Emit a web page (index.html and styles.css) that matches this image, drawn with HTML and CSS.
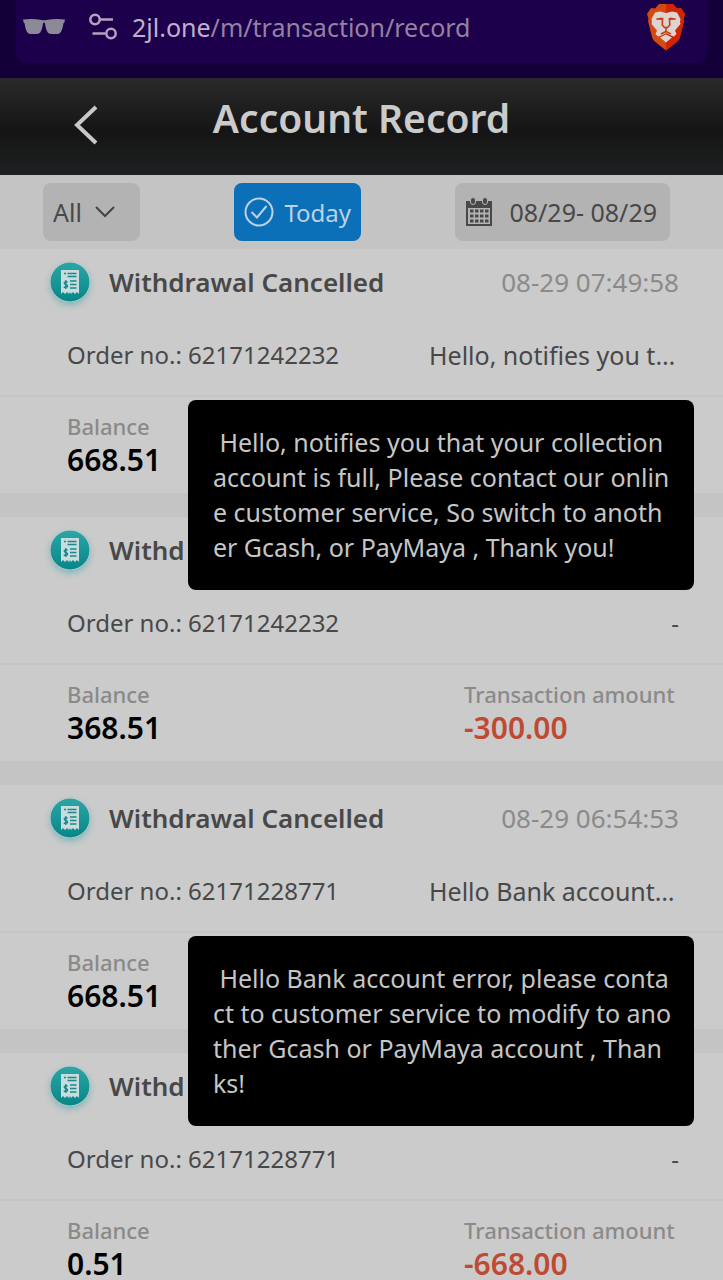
FILE: index.html
```html
<!DOCTYPE html>
<html lang="en">
<head>
  <meta charset="UTF-8">
  <meta name="viewport" content="width=device-width, initial-scale=1.0">
  <title>Account Record</title>
  <link rel="stylesheet" href="styles.css">
</head>
<body>
  <svg class="sprite" aria-hidden="true">
    <defs>
      <linearGradient id="teal" x1="0" y1="0" x2="0" y2="1">
        <stop offset="0" stop-color="#2ba6a6"/>
        <stop offset="1" stop-color="#078688"/>
      </linearGradient>
    </defs>
    <symbol id="receipt" viewBox="0 0 40 40">
      <circle cx="20" cy="20" r="19.5" fill="url(#teal)"/>
      <path d="M11 8H29V32L27 30L25 32L23 30L21 32L20 30L19 32L17 30L15 32L13 30L11 32z" fill="#c9dcdc"/>
      <path d="M14 11.500h2M17.500 11.500h9M17.500 14.500h9M20 19h6.500M20 22.500h6.500M20 26h6.500" stroke="#18898b" stroke-width="1.500"/>
      <path d="M17.500 20.500c-.6-1-3.300-1-3.300.6s3.400 1.200 3.400 2.900-3 1.900-3.700.6M15.800 18v9" fill="none" stroke="#18898b" stroke-width="1.400"/>
    </symbol>
  </svg>

  <div class="page">
    <div class="browser-bar">
      <div class="address">
        <svg class="glasses" viewBox="0 0 42 16" width="42" height="16">
          <path d="M0 0.500Q10-.5 18.500 1q2.500.6 5 0Q32-.5 42 .5l-.6 3-1 .8C39.500 11 38 15 34.500 15H28c-3.500 0-5-4-6-10.500-.4-1.300-1.600-1.300-2 0C19 11 17.500 15 14 15H7.500C4 15 2.500 11 1.600 4.300l-1-.8z" fill="#8c8a99"/>
        </svg>
        <svg class="tune" viewBox="0 0 28 27" width="28" height="27">
          <g fill="none" stroke="#b3a2bd" stroke-width="2.500">
            <circle cx="6" cy="6.500" r="4.700"/>
            <path d="M11 6.500h13M3.500 20.500h13"/>
            <circle cx="22" cy="20.500" r="4.700"/>
          </g>
        </svg>
        <span class="url">2jl.one<span class="path">/m/transaction/record</span></span>
        <svg class="lion" viewBox="0 0 40 48" width="40" height="48">
          <path d="M13 1h14l4 4.500 4-.5 4 6-1.500 5 .5 2-4 16c-1 3-2 4-4 5.500L20 47.500 10 39.500c-2-1.500-3-2.500-4-5.500L2 18l.5-2L1 11l4-6 4 .5z" fill="#d4490c"/>
          <path d="M20 1h7l4 4.500 4-.5 4 6-1.500 5 .5 2-4 16c-1 3-2 4-4 5.500L20 47.500z" fill="#cf2406"/>
          <path d="M20 10l6-1.500 5 1 3.500 6.500-.5 3 .5 2-5.500 6.500 1.500 3.500-2.500 2.500-3-1-5-2.500-5 2.500-3 1L9.500 31l1.500-3.500L5.500 21l.5-2-.5-3L9 9.500l5-1z" fill="#ddd3d0"/>
          <path d="M20 31.500l6 3-6 5-6-5z" fill="#ddd3d0"/>
          <path d="M10 15.500l6-1 1.800 1.200-1.300 1.300-6-.3zM30 15.500l-6-1-1.800 1.200 1.300 1.300 6-.3z" fill="#c93d10"/>
          <path d="M16.500 16l-.3 6 2.300 2.500h3l2.300-2.500-.3-6M20 25v3.500l-5 2.500M20 28.500l5 2.500" fill="none" stroke="#c93d10" stroke-width="1.600"/>
        </svg>
      </div>
    </div>

    <header>
      <a class="back" href="#" aria-label="Back">
        <svg viewBox="0 0 24 40" width="24" height="40"><path d="M22 2L3 20l19 18" fill="none" stroke="#c8c8c8" stroke-width="4"/></svg>
      </a>
      <h1>Account Record</h1>
    </header>

    <div class="filters">
      <label class="type">
        <select aria-label="Record type">
          <option>All</option>
        </select>
        <svg viewBox="0 0 20 12" width="20" height="12"><path d="M1 1l9 9 9-9" fill="none" stroke="#444" stroke-width="2"/></svg>
      </label>
      <button class="today">
        <svg viewBox="0 0 30 30" width="30" height="30"><g fill="none" stroke="#bcd2e4" stroke-width="2"><circle cx="15" cy="15" r="13.500"/><path d="M7.500 15l5.500 5.500L22.500 9"/></g></svg>
        Today
      </button>
      <button class="range">
        <svg viewBox="0 0 28 30" width="28" height="30">
          <path d="M1 4h26v25H1z" fill="#484848"/>
          <path d="M3 11h22v16H3z" fill="#b3b3b3"/>
          <path d="M5 14h19M5 19h19M5 24h19" stroke="#484848" stroke-width="3.200" stroke-dasharray="3.500 1.500"/>
          <g fill="#484848" stroke="#b3b3b3"><rect x="5.500" y="0.500" width="5" height="7" rx="2.500"/><rect x="17.500" y="0.500" width="5" height="7" rx="2.500"/></g>
        </svg>
        08/29- 08/29
      </button>
    </div>

    <main>
      <section class="record">
        <div class="title">
          <svg class="receipt"><use href="#receipt"/></svg>
          <h2>Withdrawal Cancelled</h2>
          <time>08-29 07:49:58</time>
        </div>
        <div class="order">
          <span>Order no.: 62171242232</span>
          <span class="note">Hello, notifies you t…</span>
        </div>
        <div class="sums">
          <div><small>Balance</small><strong>668.51</strong></div>
        </div>
        <div class="tip" role="tooltip"> Hello, notifies you that your collection<br>account is full, Please contact our onlin<br>e customer service, So switch to anoth<br>er Gcash, or PayMaya , Thank you!</div>
      </section>

      <section class="record">
        <div class="title">
          <svg class="receipt"><use href="#receipt"/></svg>
          <h2>Withd</h2>
        </div>
        <div class="order">
          <span>Order no.: 62171242232</span>
          <span>-</span>
        </div>
        <div class="sums">
          <div><small>Balance</small><strong>368.51</strong></div>
          <div><small>Transaction amount</small><strong class="minus">-300.00</strong></div>
        </div>
      </section>

      <section class="record">
        <div class="title">
          <svg class="receipt"><use href="#receipt"/></svg>
          <h2>Withdrawal Cancelled</h2>
          <time>08-29 06:54:53</time>
        </div>
        <div class="order">
          <span>Order no.: 62171228771</span>
          <span class="note">Hello Bank account…</span>
        </div>
        <div class="sums">
          <div><small>Balance</small><strong>668.51</strong></div>
        </div>
        <div class="tip" role="tooltip"> Hello Bank account error, please conta<br>ct to customer service to modify to ano<br>ther Gcash or PayMaya account , Than<br>ks!</div>
      </section>

      <section class="record">
        <div class="title">
          <svg class="receipt"><use href="#receipt"/></svg>
          <h2>Withd</h2>
        </div>
        <div class="order">
          <span>Order no.: 62171228771</span>
          <span>-</span>
        </div>
        <div class="sums">
          <div><small>Balance</small><strong>0.51</strong></div>
          <div><small>Transaction amount</small><strong class="minus">-668.00</strong></div>
        </div>
      </section>
    </main>
  </div>
</body>
</html>
```
FILE: styles.css
```css
* {
  box-sizing: border-box;
}
body {
  margin: 0;
  background: #c4c4c4;
  color: #484848;
  font-family: "Noto Sans", "Open Sans", sans-serif;
  font-size: 25px;
}
.sprite {
  position: absolute;
  width: 0;
  height: 0;
}
.page {
  height: 100vh;
  overflow: hidden;
}

/* browser bar */
.browser-bar {
  height: 78px;
  padding: 0 16px 15px;
  background: #130038;
}
.address {
  display: flex;
  align-items: center;
  height: 63px;
  padding: 0 21px 10px 7px;
  background: #1c004b;
  border-radius: 0 0 10px 10px;
}
.tune {
  margin: 0 15px 0 24px;
}
.url {
  flex: 1;
  color: #c0b0cd;
}
.path {
  color: #9382a0;
}

/* page header */
header {
  display: flex;
  align-items: center;
  justify-content: center;
  position: relative;
  height: 97px;
  padding-bottom: 18px;
  background: linear-gradient(#2a2a2a, #151515 55%, #1e2021);
}
.back {
  position: absolute;
  left: 74px;
  top: 27px;
  height: 40px;
}
h1 {
  margin: 0;
  color: #cbcbcb;
  font-size: 39px;
  font-weight: 600;
}

/* filters */
.filters {
  display: flex;
  align-items: center;
  justify-content: space-between;
  height: 74px;
  padding: 0 53px 0 43px;
}
.filters button,
.type {
  display: flex;
  align-items: center;
  height: 58px;
  padding: 0 10px;
  border: none;
  border-radius: 8px;
  background: #b3b3b3;
  color: #484848;
  font: inherit;
}
.type {
  width: 97px;
}
.type select {
  width: 42px;
  padding: 0;
  border: none;
  background: none;
  color: inherit;
  font: inherit;
  appearance: none;
}
.filters .today {
  gap: 10px;
  background: #0c70b9;
  color: #bcd2e4;
  font-size: 24px;
}
.filters .range {
  gap: 16px;
  padding-right: 13px;
}

/* records */
.record {
  position: relative;
  margin-bottom: 24px;
  background: #cbcbcb;
}
.title {
  display: flex;
  align-items: center;
  height: 67px;
  padding: 0 44px 2px 50px;
}
.receipt {
  width: 40px;
  height: 40px;
  margin-right: 19px;
  border-radius: 50%;
  box-shadow: 0 3px 6px rgba(20, 150, 160, 0.4);
}
h2 {
  flex: 1;
  margin: 0;
  font-size: 26px;
  font-weight: 600;
}
time {
  color: #8a8a8a;
  font-size: 26px;
}
.order {
  display: flex;
  align-items: center;
  justify-content: space-between;
  height: 81px;
  padding: 0 44px 2px 67px;
  border-bottom: 2px solid #c6c6c6;
  font-size: 24px;
}
.note {
  width: 250px;
  font-size: 25px;
}
.sums {
  display: grid;
  grid-template-columns: 397fr 259fr;
  height: 96px;
  padding: 13px 0 0 67px;
}
small,
strong {
  display: block;
}
small {
  color: #8a8a8a;
  font-size: 22px;
  font-weight: 500;
  line-height: 32px;
}
strong {
  color: #000;
  font-size: 30px;
  font-weight: 600;
  line-height: 36px;
}
.minus {
  color: #bf4a33;
}
.tip {
  position: absolute;
  top: 151px;
  right: 29px;
  z-index: 1;
  width: 70%;
  height: 190px;
  padding: 25px;
  border-radius: 8px;
  background: #000;
  color: #c6c6c6;
  line-height: 35px;
  white-space: pre;
}
```
